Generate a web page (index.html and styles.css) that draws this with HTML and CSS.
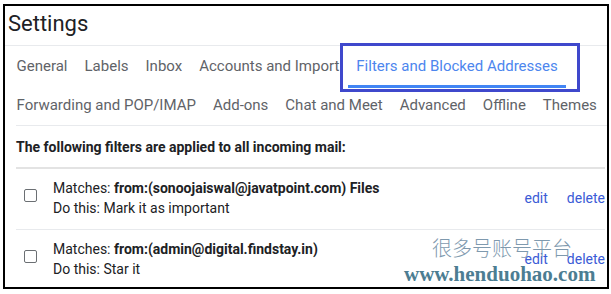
FILE: index.html
```html
<!DOCTYPE html>
<html lang="en">
<head>
<meta charset="utf-8">
<title>Settings</title>
<link rel="stylesheet" href="styles.css">
</head>
<body>
<div class="frame">
  <header class="title-bar"><h1>Settings</h1></header>
  <nav class="tabs">
    <div class="tab-row first">
      <span class="tab">General</span>
      <span class="tab">Labels</span>
      <span class="tab">Inbox</span>
      <span class="tab">Accounts and Import</span>
      <span class="tab active">Filters and Blocked Addresses<span class="highlight"></span></span>
    </div>
    <div class="tab-row second">
      <span class="tab">Forwarding and POP/IMAP</span>
      <span class="tab">Add-ons</span>
      <span class="tab">Chat and Meet</span>
      <span class="tab">Advanced</span>
      <span class="tab">Offline</span>
      <span class="tab">Themes</span>
    </div>
  </nav>
  <section class="filters">
    <p class="intro">The following filters are applied to all incoming mail:</p>
    <ul class="filter-list">
      <li class="filter">
        <span class="checkbox"></span>
        <div class="filter-desc">
          <div>Matches: <b>from:(sonoojaiswal@javatpoint.com) Files</b></div>
          <div>Do this: Mark it as important</div>
        </div>
        <div class="actions"><a>edit</a><a>delete</a></div>
      </li>
      <li class="filter">
        <span class="checkbox"></span>
        <div class="filter-desc">
          <div>Matches: <b>from:(admin@digital.findstay.in)</b></div>
          <div>Do this: Star it</div>
        </div>
        <div class="actions"><a>edit</a><a>delete</a></div>
      </li>
    </ul>
  </section>
  <div class="wm-cn">很多号账号平台</div>
  <div class="wm-url">www.henduohao.com</div>
</div>
</body>
</html>
```
FILE: styles.css
```css
* { box-sizing: border-box; }
html, body { margin: 0; padding: 0; background: #fff; }
body { font-family: Roboto, "Noto Sans", sans-serif; color: #202124; }

.frame {
  position: relative;
  margin: 4px 0 0 3px;
  width: 606px;
  height: 285px;
  border: 2px solid #000;
  overflow: hidden;
  background: #fff;
}

.title-bar {
  height: 40px;
  padding: 2px 0 0 3px;
  border-bottom: 1px solid #e8eaed;
}
.title-bar h1 {
  margin: 0;
  font-weight: 400;
  font-size: 22px;
  line-height: 32px;
  color: #202124;
}

.tabs { padding-left: 3px; }
.tabs::after {
  content: "";
  display: block;
  height: 1px;
  margin-left: 8px;
  background: #e8eaed;
}
.tab-row { display: flex; }
.tab {
  position: relative;
  padding: 0 8.5px;
  font-size: 15px;
  color: #5f6368;
  white-space: nowrap;
}
.first .tab {
  padding-top: 2px;
  line-height: 37px;
  border-bottom: 3px solid transparent;
}
.second .tab {
  padding-top: 1px;
  line-height: 33px;
  padding-bottom: 3px;
}
.first .tab.active {
  color: #4d86ee;
  border-bottom-color: #4285f4;
}
.highlight {
  position: absolute;
  top: -3px;
  left: -8px;
  right: -14px;
  bottom: -7px;
  border: 3px solid #3f48cc;
}

.intro {
  margin: 0;
  padding: 11px 0 10px 11px;
  font-size: 14px;
  font-weight: 700;
  line-height: 20px;
  color: #202124;
}
.filter-list {
  list-style: none;
  margin: 0 2px 0 11px;
  padding: 0;
  border-top: 2px solid #e3e3e3;
}
.filter {
  display: flex;
  align-items: center;
  padding: 9px 0 11px;
  border-bottom: 1px solid #e8eaed;
  font-size: 14px;
  line-height: 20px;
  color: #202124;
}
.checkbox {
  flex: none;
  width: 13px;
  height: 13px;
  margin: 0 16px 6px 8px;
  border: 1.5px solid #6b6f73;
  border-radius: 2px;
}
.filter-desc b { font-weight: 700; }
.actions {
  margin-left: auto;
  display: flex;
  gap: 19px;
}
.actions a {
  color: #3b5bd6;
  font-size: 14px;
}

.wm-cn {
  position: absolute;
  left: 427px;
  top: 231px;
  font-family: "Noto Sans CJK SC", sans-serif;
  font-weight: 300;
  font-size: 20px;
  line-height: 22px;
  color: #7e99ae;
  white-space: nowrap;
}
.wm-url {
  position: absolute;
  left: 399px;
  top: 258px;
  font-family: "Liberation Serif", serif;
  font-weight: 700;
  font-size: 21px;
  line-height: 21px;
  color: #4c7d92;
  white-space: nowrap;
}
```
